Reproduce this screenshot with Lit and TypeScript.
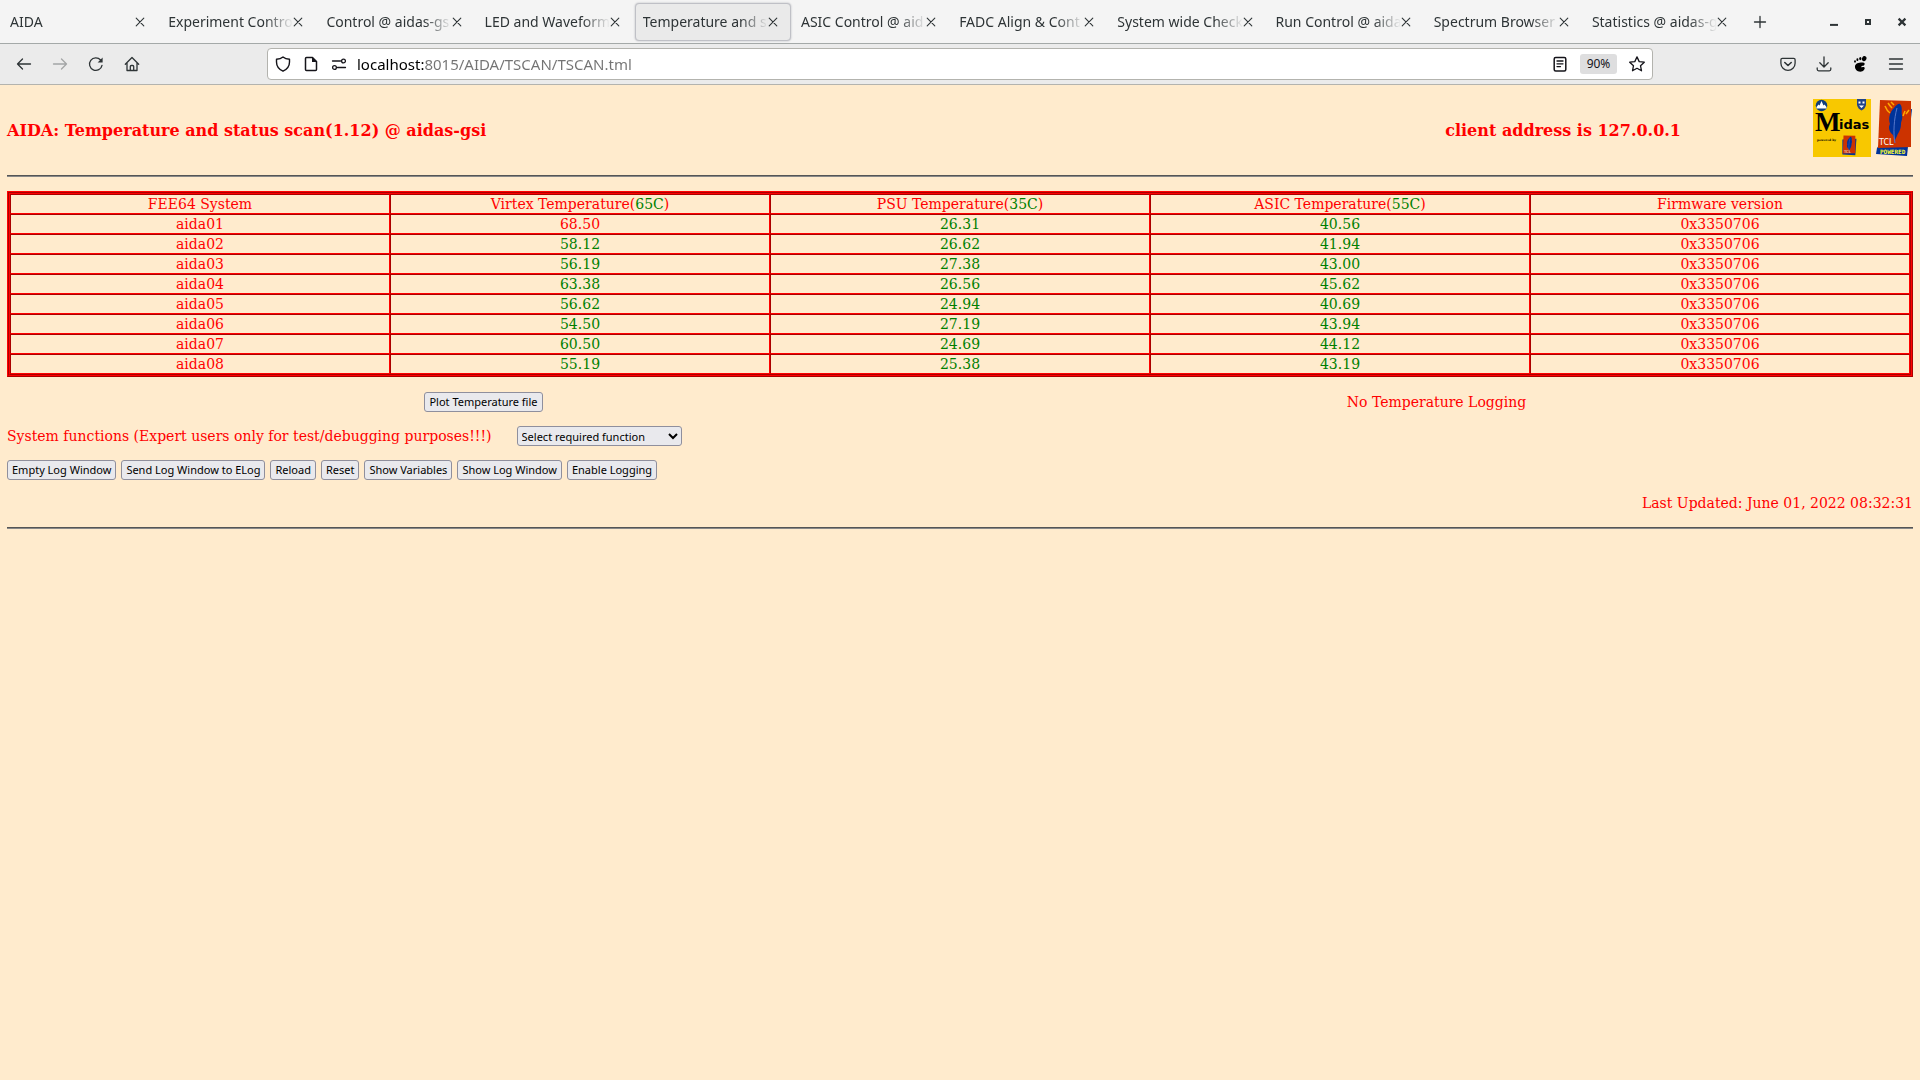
import { LitElement, html, css, svg, nothing } from "lit";
import { customElement } from "lit/decorators.js";

const TABS = [
  "AIDA",
  "Experiment Control",
  "Control @ aidas-gs",
  "LED and Waveform",
  "Temperature and st",
  "ASIC Control @ aid",
  "FADC Align & Cont",
  "System wide Check",
  "Run Control @ aida",
  "Spectrum Browser",
  "Statistics @ aidas-g",
];
const ACTIVE = 4;

const icon = (body: unknown) =>
  html`<svg width="16" height="16" viewBox="0 0 16 16" fill="none" stroke="currentColor" stroke-width="1.3" stroke-linecap="round" stroke-linejoin="round" aria-hidden="true">${body}</svg>`;

const I = {
  close: svg`<path d="M1.200 4.200l7.600 7.600M8.800 4.200l-7.600 7.600" stroke-width="1.100"/>`,
  plus: svg`<path d="M8 2.5v11M2.5 8h11"/>`,
  min: svg`<path d="M4 10.9h8" stroke-width="2" stroke-linecap="butt"/>`,
  max: svg`<path d="M6 6h4v4H6z" stroke-width="2" stroke-linejoin="miter"/>`,
  quit: svg`<path d="M4.6 4.6l6.8 6.8M11.4 4.6l-6.8 6.8" stroke-width="2.2" stroke-linecap="butt"/>`,
  back: svg`<path d="M14.5 8H1.5M6.5 3L1.5 8l5 5"/>`,
  forward: svg`<path d="M1.5 8h13M9.5 3l5 5-5 5"/>`,
  reload: svg`<path d="M14 9.3A6.3 6.3 0 1 1 12.6 4"/><path d="M14.6 1.6v5h-5z" fill="currentColor" stroke="none"/>`,
  home: svg`<path d="M1.3 8.2L8 1.5l6.7 6.7M3 7v7.5h10V7M6.3 14.5v-4q0-1 1-1h1.4q1 0 1 1v4"/>`,
  shield: svg`<path d="M8 .9C9.7 2.4 12 3.1 14.5 3.2V6c0 4.3-2.4 7.3-6.5 9.2C3.9 13.3 1.5 10.3 1.5 6V3.2C4 3.1 6.3 2.4 8 .9z" stroke-width="1.4"/>`,
  page: svg`<path d="M3.500 1.500h6L13.500 5.500v8q0 1-1 1h-9q-1 0-1-1v-11q0-1 1-1z" stroke-width="1.500"/><path d="M9 1l5 5H9z" fill="currentColor" stroke="none"/>`,
  perms: svg`<path d="M1.500 5h8M6.500 11.500h8"/><circle cx="12.500" cy="5" r="1.900"/><circle cx="3.500" cy="11.500" r="1.900"/>`,
  reader: svg`<rect x="2.200" y="1.500" width="11.600" height="13.500" rx="1.500" stroke-width="1.500"/><path d="M5 5h6M5 7.800h6M5 10.600h3.500"/>`,
  star: svg`<path d="M8 .9l2.200 4.700 5.100.6-3.800 3.500 1 5.100L8 12.300l-4.500 2.500 1-5.100L.7 6.200l5.100-.6z"/>`,
  pocket: svg`<path d="M2.300 2.300h11.400q1.400 0 1.400 1.400V7.200A7.100 7.100 0 0 1 .9 7.200V3.700q0-1.400 1.400-1.400z"/><path d="M4.800 6.500L8 9.500l3.200-3" stroke-width="1.600"/>`,
  download: svg`<path d="M8 .8v10M3.800 6.800L8 11l4.200-4.200M1.200 12v1.300q0 1.500 1.500 1.500h10.600q1.500 0 1.500-1.500V12"/>`,
  foot: svg`<g fill="currentColor" stroke="none"><ellipse cx="12.200" cy="2.600" rx="2.200" ry="2.600" transform="rotate(25 12.200 2.600)"/><ellipse cx="8.300" cy="2.600" rx="1.100" ry="1.700"/><ellipse cx="5.400" cy="3.700" rx="1" ry="1.400"/><ellipse cx="3" cy="5.400" rx=".9" ry="1.200"/><path d="M3 10C3.500 7.200 7 6.200 11 6.400c2.500.2 2 3-.3 3.400-1.500.3-1.800 1-.8 1.700.6-.6 2-.6 2.600 0 .9 1.200-1 4.200-4.200 4.200C5 15.700 2.600 13 3 10z"/></g>`,
  menu: svg`<path d="M1.500 3h13M1.500 8h13M1.500 13h13"/>`,
};

@customElement("browser-tabs")
class BrowserTabs extends LitElement {
  static styles = css`
    :host { display: block; }
    .bar { display: flex; align-items: center; height: 43px; padding: 0 2px; background: #f4f4f4; border-bottom: 1px solid #a4a9a8; color: #2e3436; }
    .tabs { display: flex; flex: 0 1 1740px; min-width: 0; }
    .tab { display: flex; flex: 1 1 0; min-width: 0; align-items: center; height: 38px; padding: 0 6px 0 7px; margin-right: 2px; border: 1px solid transparent; border-radius: 4px; box-sizing: border-box; }
    .active { background: #eaeaea; border-color: #bfc0c6; box-shadow: 0 0 2px #b0b1b8; }
    .label { flex: 1; min-width: 0; overflow: hidden; white-space: nowrap; font: 14px/22px "Noto Sans", "Open Sans", sans-serif; color: inherit; text-decoration: none;
      mask-image: linear-gradient(to left, transparent, black 28px); }
    button { display: flex; align-items: center; justify-content: center; padding: 0; border: 0; background: none; color: inherit; }
    .close { width: 16px; height: 16px; }
    .add { width: 36px; height: 38px; }
    .window { display: flex; margin-left: auto; gap: 18px; padding-right: 8px; }
  `;
  render() {
    return html`<div class="bar">
      <div class="tabs">
        ${TABS.map((t, i) => html`<div class="tab ${i === ACTIVE ? "active" : ""}">
          <a class="label" href="#" aria-current=${i === ACTIVE ? "page" : nothing}>${t}</a>
          <button class="close" aria-label="Close tab">${icon(I.close)}</button>
        </div>`)}
      </div>
      <button class="add" aria-label="New tab">${icon(I.plus)}</button>
      <div class="window">
        <button aria-label="Minimize">${icon(I.min)}</button>
        <button aria-label="Maximize">${icon(I.max)}</button>
        <button aria-label="Close window">${icon(I.quit)}</button>
      </div>
    </div>`;
  }
}

@customElement("browser-toolbar")
class BrowserToolbar extends LitElement {
  static styles = css`
    :host { display: block; }
    .bar { display: flex; align-items: center; justify-content: space-between; height: 40px; padding: 0 16px; background: #ebebeb; border-bottom: 1px solid #b3b3ae; color: #2e3436; }
    .group { display: flex; gap: 20px; }
    button { display: flex; align-items: center; justify-content: center; padding: 0; border: 0; background: none; color: inherit; }
    button:disabled { color: #a3a5a6; }
    .dark { color: #000; }
    .field { display: flex; align-items: center; flex: 0 1 1386px; height: 32px; padding: 0 7px; box-sizing: border-box; border: 1px solid #b3b3ae; border-radius: 4px; background: #fff; color: #15141a; }
    .info { display: flex; gap: 12px; margin-right: 10px; }
    /* The host part of the address is darker than the path that follows it. */
    .address { flex: 1; min-width: 0; padding: 0; border: 0; outline: 0; font: 15px/20px "Noto Sans", "Open Sans", sans-serif; color: transparent;
      background: linear-gradient(to right, #000 68px, #737373 68px); background-clip: text; -webkit-background-clip: text; }
    .actions { display: flex; align-items: center; gap: 12px; }
    .zoom { width: 37px; height: 20px; border-radius: 3px; background: #dededf; font: 12px/20px "Noto Sans", sans-serif; }
  `;
  render() {
    return html`<div class="bar">
      <div class="group">
        <button aria-label="Back">${icon(I.back)}</button>
        <button aria-label="Forward" disabled>${icon(I.forward)}</button>
        <button aria-label="Reload">${icon(I.reload)}</button>
        <button aria-label="Home">${icon(I.home)}</button>
      </div>
      <div class="field">
        <div class="info">
          <button aria-label="Tracking protection">${icon(I.shield)}</button>
          <button aria-label="Site information">${icon(I.page)}</button>
          <button aria-label="Permissions">${icon(I.perms)}</button>
        </div>
        <input class="address" type="text" aria-label="Address" spellcheck="false" value="localhost:8015/AIDA/TSCAN/TSCAN.tml" />
        <div class="actions">
          <button aria-label="Reader view">${icon(I.reader)}</button>
          <button class="zoom">90%</button>
          <button aria-label="Bookmark">${icon(I.star)}</button>
        </div>
      </div>
      <div class="group">
        <button aria-label="Pocket">${icon(I.pocket)}</button>
        <button aria-label="Downloads">${icon(I.download)}</button>
        <button class="dark" aria-label="Extension">${icon(I.foot)}</button>
        <button aria-label="Menu">${icon(I.menu)}</button>
      </div>
    </div>`;
  }
}

const feather = svg`
  <path d="M4 1l31 1v46l-33 1z" fill="#cc3300"/>
  <path d="M19 41l-2-5c-4-3-5-8-3-11-2-6 0-12 4-16 2-3 5-5 6-4 3 3 1 8 2 11 1 4-1 6-1 9 0 6-3 9-4 12z" fill="#003399"/>
  <path d="M19 44C17 34 18 20 21 9" stroke="#5577cc" stroke-width="1" fill="none"/>`;

@customElement("status-logos")
class StatusLogos extends LitElement {
  static styles = css`
    :host { display: flex; gap: 5px; }
    a { display: block; height: 58px; }
    svg { display: block; }
  `;
  render() {
    return html`
      <a href="#" aria-label="Midas"><svg width="58" height="58" viewBox="0 0 58 58">
        <rect width="58" height="58" fill="#f8c800"/>
        <circle cx="8.500" cy="6.500" r="5.800" fill="#123f7c"/>
        <path d="M3.500 8l2-2.500 1 1L8.500 2l2 4.500 1-1 2 2.500v1.500h-10z" fill="#fff"/>
        <path d="M44 0h9v6q-1 4-4.500 5.500Q45 10 44 6z" fill="#224488"/>
        <path d="M45.500 2.500h2v2h-2zM49.500 2.500h2v2h-2zM46 6.500h5l-2.500 2.500z" fill="#fff"/>
        <text x="2" y="32" font-family="Liberation Serif, serif" font-weight="bold" font-size="27" fill="#000">M</text>
        <text x="26" y="30" font-family="DejaVu Sans, sans-serif" font-weight="bold" font-size="13" fill="#000">idas</text>
        <text x="4" y="42" font-family="DejaVu Serif, serif" font-weight="bold" font-size="3" fill="#000">powered by</text>
        <g transform="translate(29 36) scale(.38 .38)">
          <path d="M1 12l37-2-3 43-34-2z" fill="#003399"/>${feather}
          <text x="5" y="47" font-family="DejaVu Sans, sans-serif" font-size="10" fill="#fff">TCL</text>
        </g>
      </svg></a>
      <a href="#" aria-label="Tcl Powered"><svg width="37" height="58" viewBox="0 0 37 58">
        <path d="M1 49l28-38 7-1-5 47-31-2z" fill="#003399"/>
        ${feather}
        <path d="M9 7q2 5 5 7M12 4q2 3 4 5M15 3l3 3M29 12l-2 5M33 11l-3 4" stroke="#ffaa00" stroke-width="1.500" fill="none"/>
        <text x="3" y="46" font-family="DejaVu Sans, sans-serif" font-size="8" fill="#fff">TCL</text>
        <text x="4" y="55" font-family="DejaVu Sans Mono, monospace" font-weight="bold" font-size="6" fill="#ffff33">POWERED</text>
      </svg></a>`;
  }
}

type Row = [string, string, string, string];
const ROWS: Row[] = [
  ["aida01", "68.50", "26.31", "40.56"],
  ["aida02", "58.12", "26.62", "41.94"],
  ["aida03", "56.19", "27.38", "43.00"],
  ["aida04", "63.38", "26.56", "45.62"],
  ["aida05", "56.62", "24.94", "40.69"],
  ["aida06", "54.50", "27.19", "43.94"],
  ["aida07", "60.50", "24.69", "44.12"],
  ["aida08", "55.19", "25.38", "43.19"],
];
const LIMITS = [65, 35, 55];
const SENSORS = ["Virtex", "PSU", "ASIC"];
const BUTTONS = ["Empty Log Window", "Send Log Window to ELog", "Reload", "Reset", "Show Variables", "Show Log Window", "Enable Logging"];

@customElement("temperature-scan")
class TemperatureScan extends LitElement {
  static styles = css`
    :host { display: block; padding: 14px 7px 0; color: #ff0000; font: 14px/18px "DejaVu Serif", serif; }
    .head { display: flex; align-items: flex-start; height: 58px; }
    h1, .client { margin: 0; padding-top: 21px; font-size: 16px; line-height: 22px; font-weight: bold; }
    h1 { flex: 1; }
    .client { padding-right: 132px; }
    hr { margin: 0; border: 0; height: 1px; background: #555; border-bottom: 1px solid #888; }
    .head + hr { margin: 18px 0 14px; }
    .frame { border: 2px ridge #ff0000; }
    table { width: 100%; table-layout: fixed; border: 1px outset #ff0000; border-spacing: 0; }
    th, td { height: 18px; padding: 0; border: 1px inset #ff0000; text-align: center; font-weight: normal; }
    .ok { color: #008000; }
    .logging { display: grid; grid-template-columns: 1fr 1fr; justify-items: center; align-items: center; height: 20px; margin: 15px 0 14px; }
    button, select { box-sizing: border-box; height: 20px; padding: 0 4px; border: 1px solid #8f8f9d; border-radius: 3px; background: #e9e9ed; color: #000; font: 11px/16px "Noto Sans", "Open Sans", sans-serif; }
    .functions { display: flex; align-items: center; gap: 25px; height: 20px; margin-bottom: 14px; }
    select { width: 165px; padding: 0; }
    .buttons { display: flex; gap: 5px; }
    .updated { margin: 14px 0 15px; text-align: right; }
  `;
  render() {
    return html`
      <div class="head">
        <h1>AIDA: Temperature and status scan(1.12) @ aidas-gsi</h1>
        <p class="client">client address is 127.0.0.1</p>
        <status-logos></status-logos>
      </div>
      <hr />
      <div class="frame"><table>
        <thead><tr>
          <th scope="col">FEE64 System</th>
          ${SENSORS.map((s, i) => html`<th scope="col">${s} Temperature(<span class="ok">${LIMITS[i]}C</span>)</th>`)}
          <th scope="col">Firmware version</th>
        </tr></thead>
        <tbody>
          ${ROWS.map(([name, ...temps]) => html`<tr>
            <td>${name}</td>
            ${temps.map((t, i) => html`<td class=${Number(t) <= LIMITS[i] ? "ok" : ""}>${t}</td>`)}
            <td>0x3350706</td>
          </tr>`)}
        </tbody>
      </table></div>
      <div class="logging"><button>Plot Temperature file</button><span>No Temperature Logging</span></div>
      <div class="functions">
        <label for="fn">System functions (Expert users only for test/debugging purposes!!!)</label>
        <select id="fn"><option>Select required function</option></select>
      </div>
      <div class="buttons">${BUTTONS.map((b) => html`<button>${b}</button>`)}</div>
      <p class="updated">Last Updated: June 01, 2022 08:32:31</p>
      <hr />`;
  }
}

@customElement("app-root")
class AppRoot extends LitElement {
  static styles = css`
    :host { display: block; min-height: 100vh; background: #ffebcd; }
  `;
  render() {
    return html`<browser-tabs></browser-tabs><browser-toolbar></browser-toolbar><temperature-scan></temperature-scan>`;
  }
}
